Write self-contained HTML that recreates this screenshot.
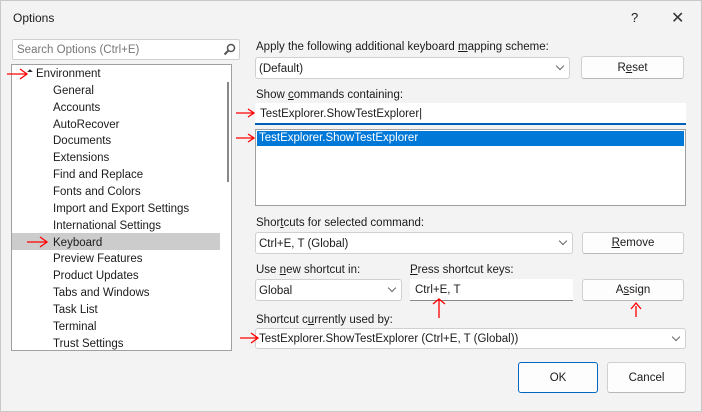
<!DOCTYPE html>
<html><head><style>
body{margin:0;width:702px;height:412px;background:#f3f3f3;font-family:"Liberation Sans",sans-serif;font-size:11.5px;color:#1b1b1b;position:relative;overflow:hidden}
.a{position:absolute;white-space:nowrap}
.box{position:absolute;background:#fff;border:1px solid #d0d0d0;border-radius:3px;box-sizing:border-box}
.btn{position:absolute;background:#fdfdfd;border:1px solid #d0d0d0;border-bottom-color:#b8b8b8;border-radius:3px;box-sizing:border-box;text-align:center}
.chev{position:absolute;right:6px;top:5px;width:5px;height:5px;border-right:1px solid #666;border-bottom:1px solid #666;transform:rotate(45deg)}
.ti{position:absolute;left:53px}
u{text-decoration:underline}
</style></head><body>
<div class="a" style="left:0;top:0;width:700px;height:410px;border:1px solid #c8c8c8"></div>
<div class="a" style="left:13px;top:11px;font-size:12px">Options</div>
<div class="a" style="left:631px;top:10px;font-size:13px">?</div>
<div class="a" style="left:671px;top:8px;font-size:16px;color:#333">✕</div>
<div class="box" style="left:12px;top:39px;width:228px;height:21px;border-radius:2px"><span class="a" style="left:4px;top:4px;color:#777">Search Options (Ctrl+E)</span>
<svg class="a" style="left:210px;top:3px" width="13" height="13"><circle cx="8" cy="5" r="3.5" fill="none" stroke="#555" stroke-width="1.5"/><line x1="5.5" y1="7.5" x2="1.5" y2="11.5" stroke="#555" stroke-width="2"/></svg></div>
<div class="a" style="left:11px;top:64px;width:221px;height:287px;background:#fff;border:1px solid #a0a0a0;box-sizing:border-box"></div>
<div class="a" style="left:227px;top:82px;width:2px;height:100px;background:#888"></div>
<div class="a" style="left:12px;top:233px;width:208px;height:17px;background:#cccccc"></div>
<div class="a" style="left:28px;top:70px;width:0;height:0;border-left:4px solid transparent;border-top:4px solid #333;transform:rotate(-45deg)"></div>
<div class="a" style="left:36px;top:68px">Environment</div>
<div class="ti a" style="top:85px">General</div>
<div class="ti a" style="top:102px">Accounts</div>
<div class="ti a" style="top:119px">AutoRecover</div>
<div class="ti a" style="top:135px">Documents</div>
<div class="ti a" style="top:152px">Extensions</div>
<div class="ti a" style="top:169px">Find and Replace</div>
<div class="ti a" style="top:186px">Fonts and Colors</div>
<div class="ti a" style="top:203px">Import and Export Settings</div>
<div class="ti a" style="top:220px">International Settings</div>
<div class="ti a" style="top:237px">Keyboard</div>
<div class="ti a" style="top:253px">Preview Features</div>
<div class="ti a" style="top:270px">Product Updates</div>
<div class="ti a" style="top:287px">Tabs and Windows</div>
<div class="ti a" style="top:304px">Task List</div>
<div class="ti a" style="top:321px">Terminal</div>
<div class="ti a" style="top:338px">Trust Settings</div>

<div class="a" style="left:256px;top:41px">Apply the following additional keyboard <u>m</u>apping scheme:</div>
<div class="box" style="left:255px;top:57px;width:315px;height:22px"><span class="a" style="left:3px;top:5px">(Default)</span><div class="chev"></div></div>
<div class="btn" style="left:581px;top:56px;width:103px;height:23px;line-height:22px">R<u>e</u>set</div>
<div class="a" style="left:256px;top:89px">Show <u>c</u>ommands containing:</div>
<div class="a" style="left:255px;top:103px;width:431px;height:22px;background:#fff;border-bottom:2px solid #005fb8;box-sizing:border-box"><span class="a" style="left:5px;top:5px">TestExplorer.ShowTestExplorer|</span></div>
<div class="a" style="left:255px;top:129px;width:431px;height:77px;background:#fff;border:1px solid #a0a0a0;box-sizing:border-box"></div>
<div class="a" style="left:257px;top:131px;width:427px;height:15px;background:#0078d7;color:#fff"><span class="a" style="left:2px;top:1px">TestExplorer.ShowTestExplorer</span></div>
<div class="a" style="left:256px;top:217px">Shor<u>t</u>cuts for selected command:</div>
<div class="box" style="left:255px;top:232px;width:318px;height:22px"><span class="a" style="left:3px;top:5px">Ctrl+E, T (Global)</span><div class="chev"></div></div>
<div class="btn" style="left:582px;top:232px;width:102px;height:22px;line-height:21px"><u>R</u>emove</div>
<div class="a" style="left:256px;top:264px">Use <u>n</u>ew shortcut in:</div>
<div class="a" style="left:410px;top:264px"><u>P</u>ress shortcut keys:</div>
<div class="box" style="left:255px;top:279px;width:147px;height:22px"><span class="a" style="left:3px;top:5px">Global</span><div class="chev"></div></div>
<div class="a" style="left:410px;top:279px;width:163px;height:22px;background:#fff;border-bottom:1px solid #888;box-sizing:border-box"><span class="a" style="left:5px;top:5px">Ctrl+E, T</span></div>
<div class="btn" style="left:582px;top:279px;width:102px;height:22px;line-height:21px">A<u>s</u>sign</div>
<div class="a" style="left:256px;top:314px">Shortcut c<u>u</u>rrently used by:</div>
<div class="box" style="left:255px;top:328px;width:431px;height:21px"><span class="a" style="left:3px;top:4px">TestExplorer.ShowTestExplorer (Ctrl+E, T (Global))</span><div class="chev"></div></div>
<div class="btn" style="left:518px;top:362px;width:80px;height:31px;line-height:30px;border:1px solid #0067c0">OK</div>
<div class="btn" style="left:607px;top:362px;width:79px;height:31px;line-height:30px">Cancel</div>

<svg class="a" style="left:0;top:0" width="702" height="412" fill="none" stroke="#f00" stroke-width="1.3">
<path d="M7 74 H26 M20 69 L27 74 L20 79"/>
<path d="M27 242 H47 M40 237 L47 242 L40 247"/>
<path d="M236 113 H254 M248 109 L254 113 L248 117"/>
<path d="M236 138 H254 M248 134 L254 138 L248 142"/>
<path d="M240 338 H258 M251 333 L258 338 L251 343"/>
<path d="M439 318 V300 M433 304 L439 299 L445 304"/>
<path d="M636 317 V306 M631 309 L636 303 L641 309"/>
</svg>
</body></html>
